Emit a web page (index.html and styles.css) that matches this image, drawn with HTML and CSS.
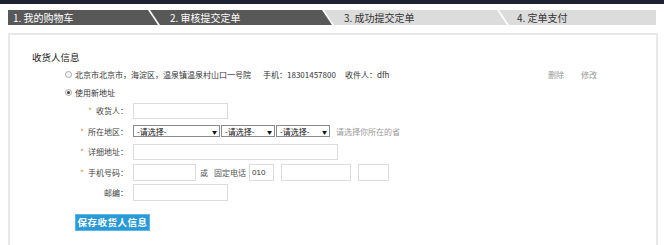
FILE: index.html
```html
<!DOCTYPE html>
<html lang="zh-CN">
<head>
<meta charset="utf-8">
<title>审核提交定单</title>
<link rel="stylesheet" href="styles.css">
</head>
<body>
<div class="topbar"></div>
<div class="steps">
  <div class="step step-first done">1. 我的购物车</div>
  <div class="step step-mid done">2. 审核提交定单</div>
  <div class="step step-mid todo">3. 成功提交定单</div>
  <div class="step step-last todo">4. 定单支付</div>
</div>
<div class="panel">
  <div class="title">收货人信息</div>
  <div class="addr-row">
    <span class="radio"></span>
    <span class="addr">北京市北京市，海淀区，温泉镇温泉村山口一号院</span>
    <span class="phone">手机：18301457800</span>
    <span class="receiver">收件人：dfh</span>
    <span class="op op-del">删除</span>
    <span class="op">修改</span>
  </div>
  <div class="addr-row new">
    <span class="radio checked"></span>
    <span>使用新地址</span>
  </div>
  <div class="form">
    <div class="frow">
      <label class="lbl"><span class="star">*</span>收货人：</label>
      <input class="inp w95" type="text">
    </div>
    <div class="frow">
      <label class="lbl"><span class="star">*</span>所在地区：</label>
      <div class="selects">
        <div class="sel w87"><span>-请选择-</span><span class="arrow">▼</span></div>
        <div class="sel w54"><span>-请选择-</span><span class="arrow">▼</span></div>
        <div class="sel w54"><span>-请选择-</span><span class="arrow">▼</span></div>
      </div>
      <span class="hint">请选择你所在的省</span>
    </div>
    <div class="frow">
      <label class="lbl"><span class="star">*</span>详细地址：</label>
      <input class="inp w205" type="text">
    </div>
    <div class="frow">
      <label class="lbl"><span class="star">*</span>手机号码：</label>
      <input class="inp w63 tall" type="text">
      <span class="or">或</span>
      <span class="fixed">固定电话</span>
      <input class="inp w25 tall" type="text" value="010">
      <input class="inp w70 tall gap7" type="text">
      <input class="inp w31 tall gap7" type="text">
    </div>
    <div class="frow">
      <label class="lbl">邮编：</label>
      <input class="inp w95 tall" type="text">
    </div>
  </div>
  <button class="save" type="button">保存收货人信息</button>
</div>
</body>
</html>
```
FILE: styles.css
```css
* { box-sizing: border-box; }
html, body { margin: 0; padding: 0; background: #fff; }
body {
  font-family: "Noto Sans CJK SC", "DejaVu Sans", sans-serif;
  font-size: 8px;
  color: #333;
  width: 664px;
  height: 245px;
  overflow: hidden;
}
.topbar { height: 4px; background: #1c2232; }

.steps {
  display: flex;
  height: 15px;
  margin: 6px 8px 0 8px;
  width: 648px;
}
.step {
  height: 15px;
  line-height: 15px;
  font-size: 10px;
  white-space: nowrap;
}
.step.done { background: #585858; color: #fff; }
.step.todo { background: #dcdcdc; color: #333; }
.step-first {
  width: 150px;
  padding-left: 5px;
  clip-path: polygon(0 0, 140px 0, 150px 100%, 0 100%);
}
.step-mid {
  width: 182px;
  margin-left: -8px;
  padding-left: 20px;
  clip-path: polygon(0 0, calc(100% - 10px) 0, 100% 100%, 10px 100%);
}
.step-mid.todo { width: 183px; }
.step-last {
  flex: 1;
  margin-left: -8px;
  padding-left: 18px;
  clip-path: polygon(0 0, 100% 0, 100% 100%, 10px 100%);
}

.panel {
  margin: 8px 6px 0 8px;
  border: 2px solid #e8e8e8;
  border-bottom: none;
  height: 220px;
  padding: 16px 0 0 0;
}
.title {
  height: 12px;
  line-height: 12px;
  font-size: 9.5px;
  color: #222;
  padding-left: 22px;
}
.addr-row {
  display: flex;
  align-items: center;
  height: 16px;
  margin-top: 3px;
  padding-left: 55px;
  white-space: nowrap;
}
.addr-row.new { margin-top: 2px; }
.radio {
  width: 7px;
  height: 7px;
  border: 1px solid #aaa;
  border-radius: 50%;
  background: #f4f4f4;
  margin-right: 3px;
  display: inline-flex;
  align-items: center;
  justify-content: center;
}
.radio.checked::after {
  content: "";
  width: 3px;
  height: 3px;
  border-radius: 50%;
  background: #444;
}
.addr { width: 188px; }
.phone { width: 82px; }
.receiver { width: 203px; }
.op { color: #999; }
.op-del { width: 33px; }

.form { margin-top: 0.25px; }
.frow {
  display: flex;
  align-items: center;
  height: 20.5px;
  white-space: nowrap;
}
.lbl {
  width: 123px;
  text-align: right;
  padding-right: 5px;
  color: #444;
}
.star { color: #f5822a; margin-right: 4px; }
.inp {
  height: 16px;
  border: 1px solid #dcdcdc;
  background: #fff;
  font-family: "Liberation Sans", sans-serif;
  font-size: 8px;
  color: #333;
  padding: 0 2px;
  outline: none;
  margin: 0;
}
.inp.tall { height: 17px; }
.w95 { width: 95px; }
.w205 { width: 205px; }
.w63 { width: 63px; }
.w25 { width: 25px; }
.w70 { width: 70px; }
.w31 { width: 31px; }
.gap7 { margin-left: 7px; }
.selects { display: flex; gap: 1px; }
.sel {
  height: 12px;
  border: 1px solid #8a8a8a;
  background: #fff;
  display: flex;
  align-items: center;
  justify-content: space-between;
  padding: 0 2px 0 3px;
  color: #111;
  font-size: 8px;
}
.w87 { width: 87px; }
.w54 { width: 54px; }
.arrow { font-size: 5px; color: #111; }
.hint { color: #999; margin-left: 6px; }
.or { margin-left: 4px; color: #555; }
.fixed { margin-left: 6px; margin-right: 3px; color: #555; }

.save {
  display: block;
  margin: 11px 0 0 65px;
  width: 75px;
  height: 17px;
  padding: 0;
  border: 1px solid #5bb8e8;
  background: #2a9ad6;
  color: #fff;
  font-family: "Noto Sans CJK SC", sans-serif;
  font-size: 9.5px;
  font-weight: bold;
  letter-spacing: 0.5px;
  cursor: pointer;
}
```
